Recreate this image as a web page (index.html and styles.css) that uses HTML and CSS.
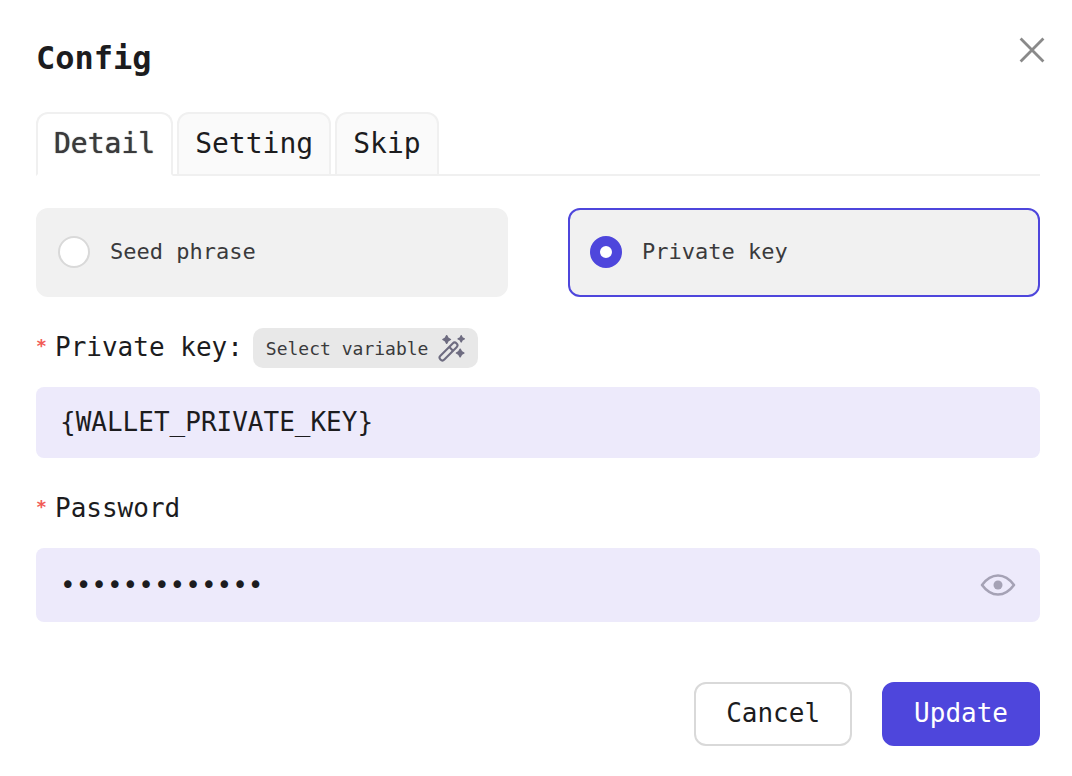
FILE: index.html
```html
<!DOCTYPE html>
<html lang="en">
<head>
<meta charset="UTF-8">
<meta name="viewport" content="width=device-width, initial-scale=1.0">
<title>Config</title>
<link rel="stylesheet" href="styles.css">
</head>
<body>

<div class="dialog" role="dialog" aria-labelledby="dialog-title">
  <h1 class="title" id="dialog-title">Config</h1>
  <button class="close" type="button" aria-label="Close">
    <svg viewBox="0 0 28 28" width="28" height="28" fill="none" stroke="#8a8a8a" stroke-width="2.8">
      <path d="M2.6 2.6L25.4 25.4M25.4 2.6L2.6 25.4"/>
    </svg>
  </button>

  <div class="tabs" role="tablist">
    <button class="tab active" type="button" role="tab" aria-selected="true">Detail</button>
    <button class="tab" type="button" role="tab" aria-selected="false">Setting</button>
    <button class="tab" type="button" role="tab" aria-selected="false">Skip</button>
  </div>

  <form class="form">
    <div class="options">
      <label class="option">
        <input type="radio" name="type" value="seed">
        <span>Seed phrase</span>
      </label>
      <label class="option">
        <input type="radio" name="type" value="key" checked>
        <span>Private key</span>
      </label>
    </div>

    <div class="field">
      <div class="field-head">
        <span class="required">*</span>
        <label class="field-label" for="private-key">Private key:</label>
        <button class="variable" type="button">
          Select variable
          <svg viewBox="0 0 78 78" width="27" height="27">
            <g fill="none" stroke="#6e6c80" stroke-width="6" stroke-linejoin="round">
              <rect x="-7" y="-8" width="66" height="16" rx="8" transform="translate(12 66) rotate(-45)"/>
              <path d="M32 34L44 46"/>
            </g>
            <g fill="#6e6c80" stroke="#6e6c80" stroke-width="4" stroke-linejoin="round">
              <path d="M25 2L29 9L36 13L29 17L25 24L21 17L14 13L21 9Z"/>
              <path d="M67 2L70 8L76 11L70 14L67 20L64 14L58 11L64 8Z"/>
              <path d="M64 41L68 48L75 52L68 56L64 63L60 56L53 52L60 48Z"/>
            </g>
          </svg>
        </button>
      </div>
      <input class="input" id="private-key" type="text" value="{WALLET_PRIVATE_KEY}" spellcheck="false">
    </div>

    <div class="field">
      <div class="field-head">
        <span class="required">*</span>
        <label class="field-label" for="password">Password</label>
      </div>
      <div class="password-box">
        <input class="input" id="password" type="password" value="password12345">
        <button class="eye" type="button" aria-label="Show password">
          <svg viewBox="0 0 36 24" width="36" height="24">
            <path d="M2 12Q9 2.5 18 2.5T34 12Q27 21.5 18 21.5T2 12Z" fill="none" stroke="#a5a2b5" stroke-width="2.6" stroke-linejoin="round"/>
            <circle cx="18" cy="12" r="4.5" fill="#a5a2b5"/>
          </svg>
        </button>
      </div>
    </div>

    <div class="footer">
      <button class="btn" type="button">Cancel</button>
      <button class="btn primary" type="submit">Update</button>
    </div>
  </form>
</div>

<script>
  const password = document.getElementById('password');

  document.querySelector('.eye').addEventListener('click', () => {
    password.type = password.type === 'password' ? 'text' : 'password';
  });

  document.querySelector('.form').addEventListener('submit', (e) => {
    e.preventDefault();
  });
</script>

</body>
</html>
```
FILE: styles.css
```css
* {
  box-sizing: border-box;
}
body {
  margin: 0;
  background-color: #fff;
  color: #1c1c1e;
  font-family: "DejaVu Sans Mono", monospace;
  font-size: 26px;
}
button,
input {
  font: inherit;
  color: inherit;
}
button {
  cursor: pointer;
}
svg {
  display: block;
}
.dialog {
  position: relative;
  padding: 36px 32px 30px 36px;
}
.title {
  margin: 0 0 32px;
  font-size: 32px;
  line-height: 44px;
}
.close {
  position: absolute;
  top: 36px;
  right: 26px;
  padding: 0;
  border: none;
  background: none;
}
.tabs {
  display: flex;
  gap: 4px;
  margin-bottom: 32px;
  box-shadow: inset 0 -2px #f0f0f0;
}
.tab {
  padding: 13px 16px;
  border: 2px solid #f0f0f0;
  border-radius: 12px 12px 0 0;
  background-color: #fafafa;
  font-size: 28px;
  line-height: 34px;
}
.tab.active {
  border-bottom-color: #fff;
  background-color: #fff;
  color: #3a3a3c;
  text-shadow: 0 0 1px currentColor;
}
.options {
  display: grid;
  grid-template-columns: 1fr 1fr;
  gap: 60px;
}
.option {
  display: flex;
  align-items: center;
  gap: 20px;
  padding: 26px 20px 27px;
  border: 2px solid #f1f1f1;
  border-radius: 12px;
  background-color: #f1f1f1;
  color: #3a3a3c;
  font-size: 22px;
  line-height: 32px;
  cursor: pointer;
}
.option:has(input:checked) {
  border-color: #4e46dc;
}
.option input {
  appearance: none;
  width: 32px;
  height: 32px;
  margin: 0;
  border: 2px solid #d9d9d9;
  border-radius: 50%;
  background-color: #fff;
}
.option input:checked {
  border: 10px solid #4e46dc;
}
.field {
  margin-top: 31px;
}
.field-head {
  display: flex;
  align-items: center;
  height: 40px;
  margin-bottom: 19px;
}
.required {
  align-self: flex-start;
  width: 19px;
  color: #f15b56;
  font-size: 18px;
  font-weight: bold;
  line-height: 36px;
}
.field-label {
  margin-right: 10px;
  padding-bottom: 2px;
}
.variable {
  display: flex;
  align-items: center;
  gap: 10px;
  height: 40px;
  padding: 0 13px;
  border: none;
  border-radius: 10px;
  background-color: #e8e8e8;
  color: #3a3a3c;
  font-size: 18px;
}
.input {
  display: block;
  width: 100%;
  padding: 20px 24px;
  border: none;
  border-radius: 8px;
  outline: none;
  background-color: #edeafb;
  line-height: 31px;
}
.password-box {
  display: flex;
  align-items: center;
  padding: 0 24px;
  border-radius: 8px;
  background-color: #edeafb;
}
.password-box .input {
  flex: 1;
  padding: 20px 0;
  line-height: 34px;
}
.eye {
  padding: 0;
  border: none;
  background: none;
}
.footer {
  display: flex;
  justify-content: flex-end;
  gap: 30px;
  margin-top: 60px;
}
.btn {
  padding: 14px 30px 16px;
  border: 2px solid #d9d9d9;
  border-radius: 12px;
  background-color: #fff;
  line-height: 30px;
}
.btn.primary {
  border-color: #4e46dc;
  background-color: #4e46dc;
  color: #fff;
}
```
